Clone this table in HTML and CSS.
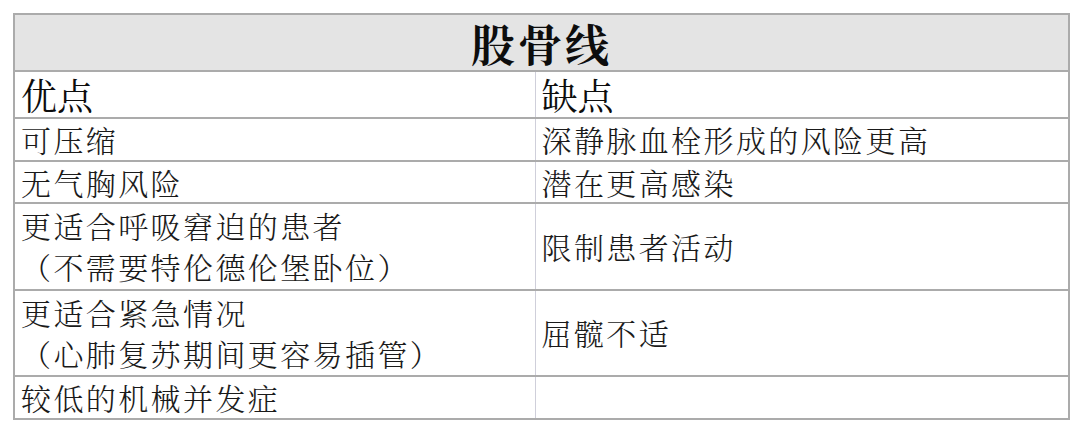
FILE: index.html
```html
<!DOCTYPE html>
<html lang="zh-CN">
<head>
<meta charset="utf-8">
<title>股骨线</title>
<link rel="stylesheet" href="styles.css">
</head>
<body>
<div class="page">
  <table class="compare">
    <colgroup>
      <col class="col-left">
      <col class="col-right">
    </colgroup>
    <thead>
      <tr class="title-row">
        <th colspan="2">股骨线</th>
      </tr>
      <tr class="head-row">
        <th>优点</th>
        <th>缺点</th>
      </tr>
    </thead>
    <tbody>
      <tr>
        <td>可压缩</td>
        <td>深静脉血栓形成的风险更高</td>
      </tr>
      <tr>
        <td>无气胸风险</td>
        <td>潜在更高感染</td>
      </tr>
      <tr class="double">
        <td>更适合呼吸窘迫的患者<br>（不需要特伦德伦堡卧位）</td>
        <td>限制患者活动</td>
      </tr>
      <tr class="double">
        <td>更适合紧急情况<br>（心肺复苏期间更容易插管）</td>
        <td>屈髋不适</td>
      </tr>
      <tr>
        <td>较低的机械并发症</td>
        <td></td>
      </tr>
    </tbody>
  </table>
</div>
</body>
</html>
```

FILE: styles.css
```css
html, body {
  margin: 0;
  padding: 0;
  background: #ffffff;
}

.page {
  padding: 13px 0 0 13px;
}

.compare {
  width: 1055px;
  border-collapse: collapse;
  table-layout: fixed;
  font-family: "Noto Serif CJK SC", "Noto Sans CJK SC", serif;
  color: #1a1a1a;
}

.col-left {
  width: 521px;
}

.col-right {
  width: 534px;
}

.compare th,
.compare td {
  border-top: 2px solid #ababab;
  border-bottom: 2px solid #ababab;
  border-left: 1px solid #cfcfda;
  border-right: 1px solid #cfcfda;
  padding: 0 6px;
  text-align: left;
  vertical-align: middle;
}

.compare th:first-child,
.compare td:first-child {
  border-left: 2px solid #ababab;
}

.compare th:last-child,
.compare td:last-child {
  border-right: 2px solid #ababab;
}

.title-row th {
  background: #e4e4e4;
  text-align: center;
  font-size: 44px;
  font-weight: 700;
  letter-spacing: 3px;
  height: 55px;
  line-height: 48px;
  color: #0d0d0d;
}

.head-row th {
  font-size: 36px;
  font-weight: 400;
  height: 45px;
  line-height: 40px;
  color: #0d0d0d;
}

.compare td {
  font-size: 30px;
  font-weight: 300;
  letter-spacing: 2.4px;
  height: 40.5px;
  line-height: 40px;
}

.double td {
  height: 84.5px;
  line-height: 41px;
}
```
